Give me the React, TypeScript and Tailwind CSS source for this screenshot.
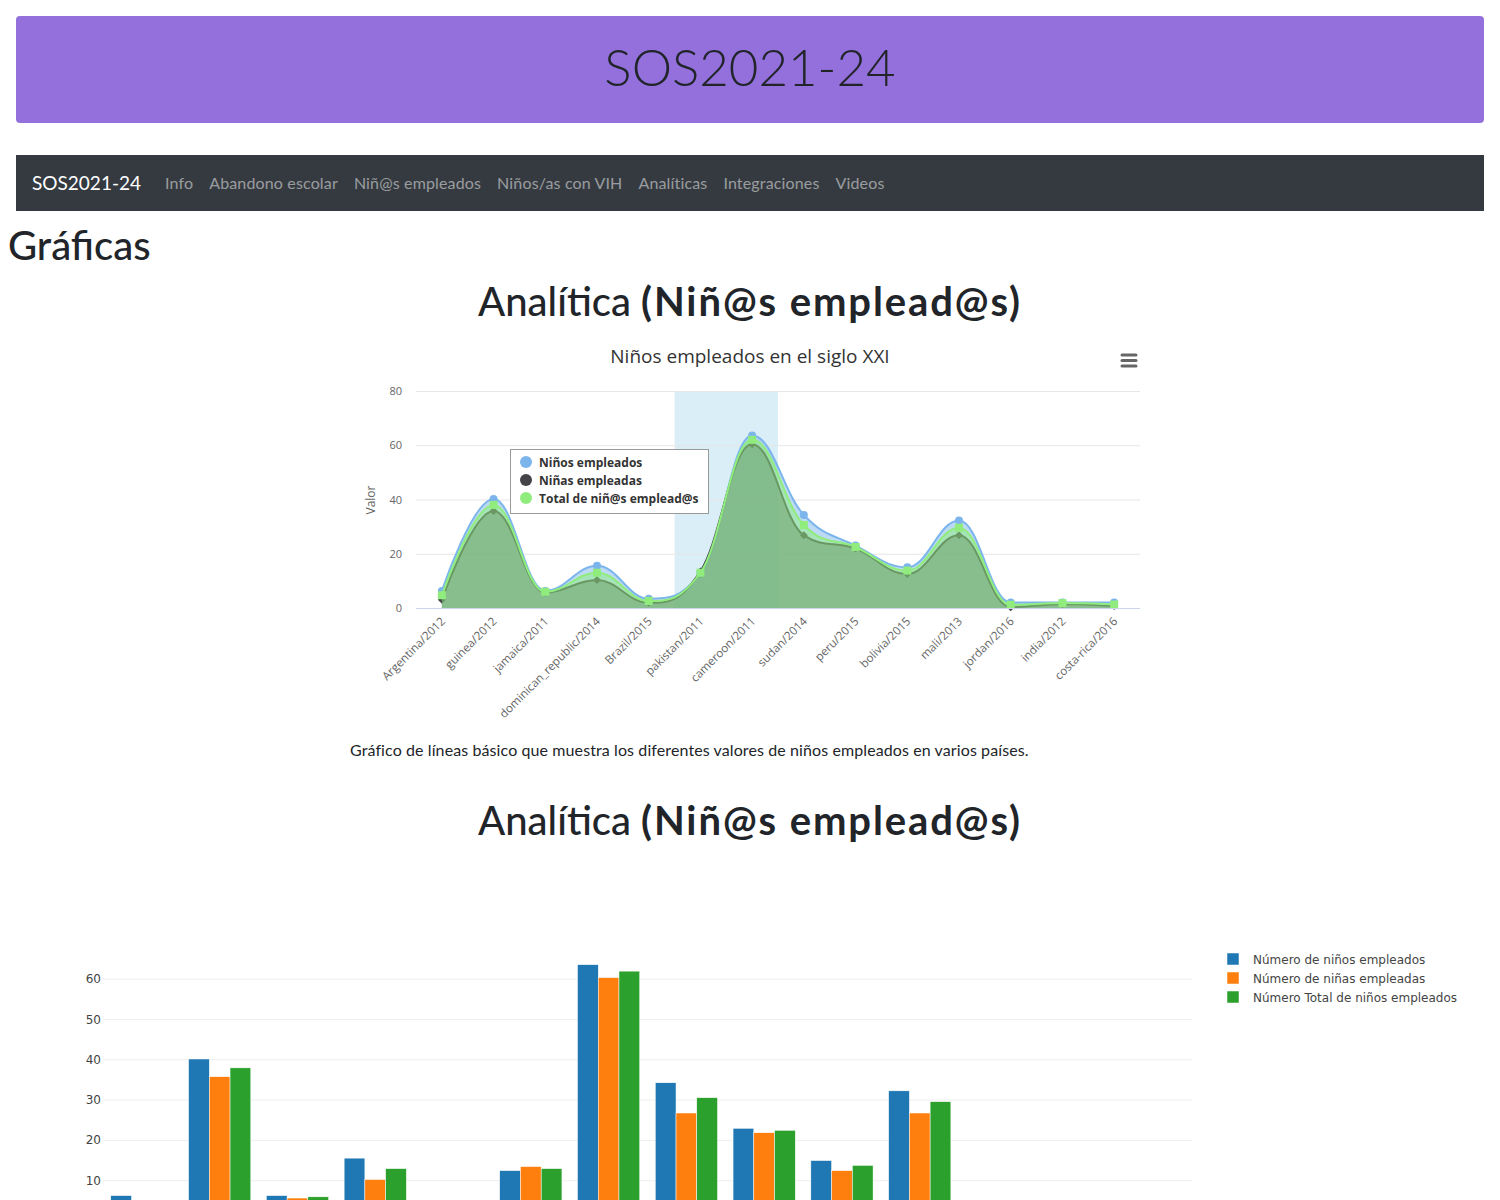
import React from "react";

const cats = [
  "Argentina/2012",
  "guinea/2012",
  "jamaica/2011",
  "dominican_republic/2014",
  "Brazil/2015",
  "pakistan/2011",
  "cameroon/2011",
  "sudan/2014",
  "peru/2015",
  "bolivia/2015",
  "mali/2013",
  "jordan/2016",
  "india/2012",
  "costa-rica/2016",
];
const ninos = [6.3, 40.2, 6.3, 15.6, 3.4, 12.5, 63.6, 34.3, 23.0, 15.0, 32.3, 2.0, 2.0, 2.0];
const ninas = [3.0, 35.8, 5.7, 10.3, 1.9, 13.5, 60.4, 26.8, 21.9, 12.5, 26.8, 0.3, 1.5, 0.7];
const total = [4.7, 38.0, 6.0, 13.0, 2.6, 13.0, 62.0, 30.6, 22.5, 13.8, 29.6, 1.2, 1.8, 1.3];

type P = { x: number; y: number };

function splinePath(pts: P[]): string {
  const sm = 1.5;
  const dn = 2.5;
  const rc: (P | null)[] = pts.map(() => null);
  let d = `M ${pts[0].x} ${pts[0].y}`;
  for (let i = 1; i < pts.length; i++) {
    const p = pts[i];
    const last = pts[i - 1];
    const next = pts[i + 1];
    let lcx = p.x;
    let lcy = p.y;
    if (next) {
      lcx = (sm * p.x + last.x) / dn;
      lcy = (sm * p.y + last.y) / dn;
      const rcx = (sm * p.x + next.x) / dn;
      let rcy = (sm * p.y + next.y) / dn;
      const corr = ((rcy - lcy) * (rcx - p.x)) / (rcx - lcx) + p.y - rcy;
      lcy += corr;
      rcy += corr;
      if (lcy > last.y && lcy > p.y) {
        lcy = Math.max(last.y, p.y);
        rcy = 2 * p.y - lcy;
      } else if (lcy < last.y && lcy < p.y) {
        lcy = Math.min(last.y, p.y);
        rcy = 2 * p.y - lcy;
      }
      if (rcy > next.y && rcy > p.y) {
        rcy = Math.max(next.y, p.y);
        lcy = 2 * p.y - rcy;
      } else if (rcy < next.y && rcy < p.y) {
        rcy = Math.min(next.y, p.y);
        lcy = 2 * p.y - rcy;
      }
      rc[i] = { x: rcx, y: rcy };
    }
    const lr = rc[i - 1] ?? last;
    d += ` C ${lr.x.toFixed(2)} ${lr.y.toFixed(2)} ${lcx.toFixed(2)} ${lcy.toFixed(2)} ${p.x.toFixed(2)} ${p.y.toFixed(2)}`;
  }
  return d;
}

const HC_FONT = "'Open Sans', 'Liberation Sans', sans-serif";

function LineChart() {
  const PL = 66;
  const PR = 790;
  const PT = 58;
  const PB = 275;
  const step = (PR - PL) / cats.length;
  const cx = (i: number) => PL + (i + 0.5) * step;
  const yv = (v: number) => PB - (v * (PB - PT)) / 80;

  const series = [
    { data: ninos, color: "#7cb5ec", marker: "circle" },
    { data: ninas, color: "#434348", marker: "diamond" },
    { data: total, color: "#90ed7d", marker: "square" },
  ];

  return (
    <svg width={800} height={400} viewBox="0 0 800 400" className="block">
      <rect x={0} y={0} width={800} height={400} fill="#ffffff" />
      {/* plot band */}
      <rect x={PL + 5 * step} y={PT} width={2 * step} height={PB - PT} fill="rgba(68,170,213,0.2)" />
      {/* grid */}
      {[20, 40, 60, 80].map((v) => (
        <line key={v} x1={PL} x2={PR} y1={yv(v) + 0.5} y2={yv(v) + 0.5} stroke="#e6e6e6" strokeWidth={1} />
      ))}
      {/* title */}
      <text x={400} y={30} textAnchor="middle" fontFamily={HC_FONT} fontSize={19} fill="#333333">
        Niños empleados en el siglo XXI
      </text>
      {/* menu button */}
      <g stroke="#666666" strokeWidth={3} strokeLinecap="round">
        <line x1={772} x2={786} y1={22} y2={22} />
        <line x1={772} x2={786} y1={27.5} y2={27.5} />
        <line x1={772} x2={786} y1={33} y2={33} />
      </g>
      {/* y labels */}
      {[0, 20, 40, 60, 80].map((v) => (
        <text key={v} x={52} y={yv(v) + 4} textAnchor="end" fontFamily={HC_FONT} fontSize={11} fill="#666666">
          {v}
        </text>
      ))}
      <text
        x={25}
        y={167}
        textAnchor="middle"
        transform="rotate(-90 25 167)"
        fontFamily={HC_FONT}
        fontSize={12}
        fill="#666666"
      >
        Valor
      </text>
      {/* series */}
      {series.map((s, si) => {
        const pts = s.data.map((v, i) => ({ x: cx(i), y: yv(v) }));
        const line = splinePath(pts);
        const area = `${line} L ${pts[pts.length - 1].x} ${PB} L ${pts[0].x} ${PB} Z`;
        return (
          <g key={si}>
            <path d={area} fill={s.color} fillOpacity={0.5} />
            <path d={line} fill="none" stroke={s.color} strokeWidth={2} strokeLinejoin="round" />
            {pts.map((p, i) =>
              s.marker === "circle" ? (
                <circle key={i} cx={p.x} cy={p.y} r={4} fill={s.color} />
              ) : s.marker === "diamond" ? (
                <path
                  key={i}
                  d={`M ${p.x} ${p.y - 4} L ${p.x + 4} ${p.y} L ${p.x} ${p.y + 4} L ${p.x - 4} ${p.y} Z`}
                  fill={s.color}
                />
              ) : (
                <rect key={i} x={p.x - 4} y={p.y - 4} width={8} height={8} fill={s.color} />
              )
            )}
          </g>
        );
      })}
      {/* x axis */}
      <line x1={PL} x2={PR} y1={PB + 0.5} y2={PB + 0.5} stroke="#ccd6eb" strokeWidth={1} />
      {cats.map((c, i) => {
        const x = cx(i) + 4;
        const y = 289;
        return (
          <text
            key={c}
            x={x}
            y={y}
            textAnchor="end"
            transform={`rotate(-45 ${x} ${y})`}
            fontFamily={HC_FONT}
            fontSize={11.6}
            fill="#666666"
          >
            {c}
          </text>
        );
      })}
      {/* legend */}
      <rect x={160.5} y={116.5} width={198} height={64} fill="#ffffff" stroke="#999999" strokeWidth={1} />
      {[
        { c: "#7cb5ec", t: "Niños empleados" },
        { c: "#434348", t: "Niñas empleadas" },
        { c: "#90ed7d", t: "Total de niñ@s emplead@s" },
      ].map((l, i) => (
        <g key={l.t}>
          <circle cx={176} cy={129 + i * 18} r={6} fill={l.c} />
          <text x={189} y={133.5 + i * 18} fontFamily={HC_FONT} fontSize={12} fontWeight={700} fill="#333333">
            {l.t}
          </text>
        </g>
      ))}
    </svg>
  );
}

const PLOTLY_FONT = "'DejaVu Sans', Verdana, sans-serif";

function BarChart() {
  const L = 103;
  const R = 1192;
  const Z = 369;
  const k = 4.03;
  const step = (R - L) / cats.length;
  const bw = (step * 0.8) / 3;
  const colors = ["#1f77b4", "#ff7f0e", "#2ca02c"];
  const data = [ninos, ninas, total];
  return (
    <svg width={1500} height={450} viewBox="0 0 1500 450" className="block">
      {[10, 20, 30, 40, 50, 60].map((v) => (
        <g key={v}>
          <line x1={L} x2={R} y1={Z - v * k} y2={Z - v * k} stroke="#eeeeee" strokeWidth={1} />
          <text x={101} y={Z - v * k + 4} textAnchor="end" fontFamily={PLOTLY_FONT} fontSize={12} fill="#444444">
            {v}
          </text>
        </g>
      ))}
      {cats.map((c, i) => {
        const start = L + i * step + step * 0.1;
        return (
          <g key={c}>
            {data.map((d, j) => (
              <rect
                key={j}
                x={start + j * bw}
                y={Z - d[i] * k}
                width={bw}
                height={d[i] * k}
                fill={colors[j]}
                stroke="#ffffff"
                strokeWidth={0.5}
              />
            ))}
          </g>
        );
      })}
      {[
        "Número de niños empleados",
        "Número de niñas empleadas",
        "Número Total de niños empleados",
      ].map((t, i) => (
        <g key={t}>
          <rect x={1227} y={101 + i * 19} width={12} height={12} fill={colors[i]} stroke="#ffffff" strokeWidth={0.5} />
          <text x={1253} y={111.5 + i * 19} fontFamily={PLOTLY_FONT} fontSize={12} fill="#444444">
            {t}
          </text>
        </g>
      ))}
    </svg>
  );
}

export default function App() {
  return (
    <div className="bg-white text-[#212529] font-['Lato','Noto_Sans',sans-serif]">
      <div className="mx-4 pt-4">
        <div className="flex h-[107px] items-center justify-center rounded-[4px] bg-[#9370db] pb-[6px]">
          <h1 className="text-[51px] font-light leading-[1.2]">SOS2021-24</h1>
        </div>
      </div>
      <nav className="mx-4 mt-8 flex h-14 items-center bg-[#343a40] px-4">
        <span className="mr-4 text-[19px] text-white">SOS2021-24</span>
        {["Info", "Abandono escolar", "Niñ@s empleados", "Niños/as con VIH", "Analíticas", "Integraciones", "Videos"].map(
          (t) => (
            <span key={t} className="px-2 text-base tracking-[0.15px] text-[rgba(255,255,255,0.5)]">
              {t}
            </span>
          )
        )}
      </nav>
      <h1 className="mt-[10px] mb-2 pl-2 text-[40px] font-medium leading-[1.2]">Gráficas</h1>
      <h1 className="mb-2 text-center text-[40px] font-medium leading-[1.2]">
        Analítica <span className="font-bold tracking-[1.9px]">(Niñ@s emplead@s)</span>
      </h1>
      <figure className="mx-auto mt-0 mb-[34px] w-[800px]">
        <LineChart />
        <p className="mt-[5px] mb-0 text-base leading-6 tracking-[0.1px]">
          Gráfico de líneas básico que muestra los diferentes valores de niños empleados en varios países.
        </p>
      </figure>
      <h1 className="mb-2 text-center text-[40px] font-medium leading-[1.2]">
        Analítica <span className="font-bold tracking-[1.9px]">(Niñ@s emplead@s)</span>
      </h1>
      <BarChart />
    </div>
  );
}
